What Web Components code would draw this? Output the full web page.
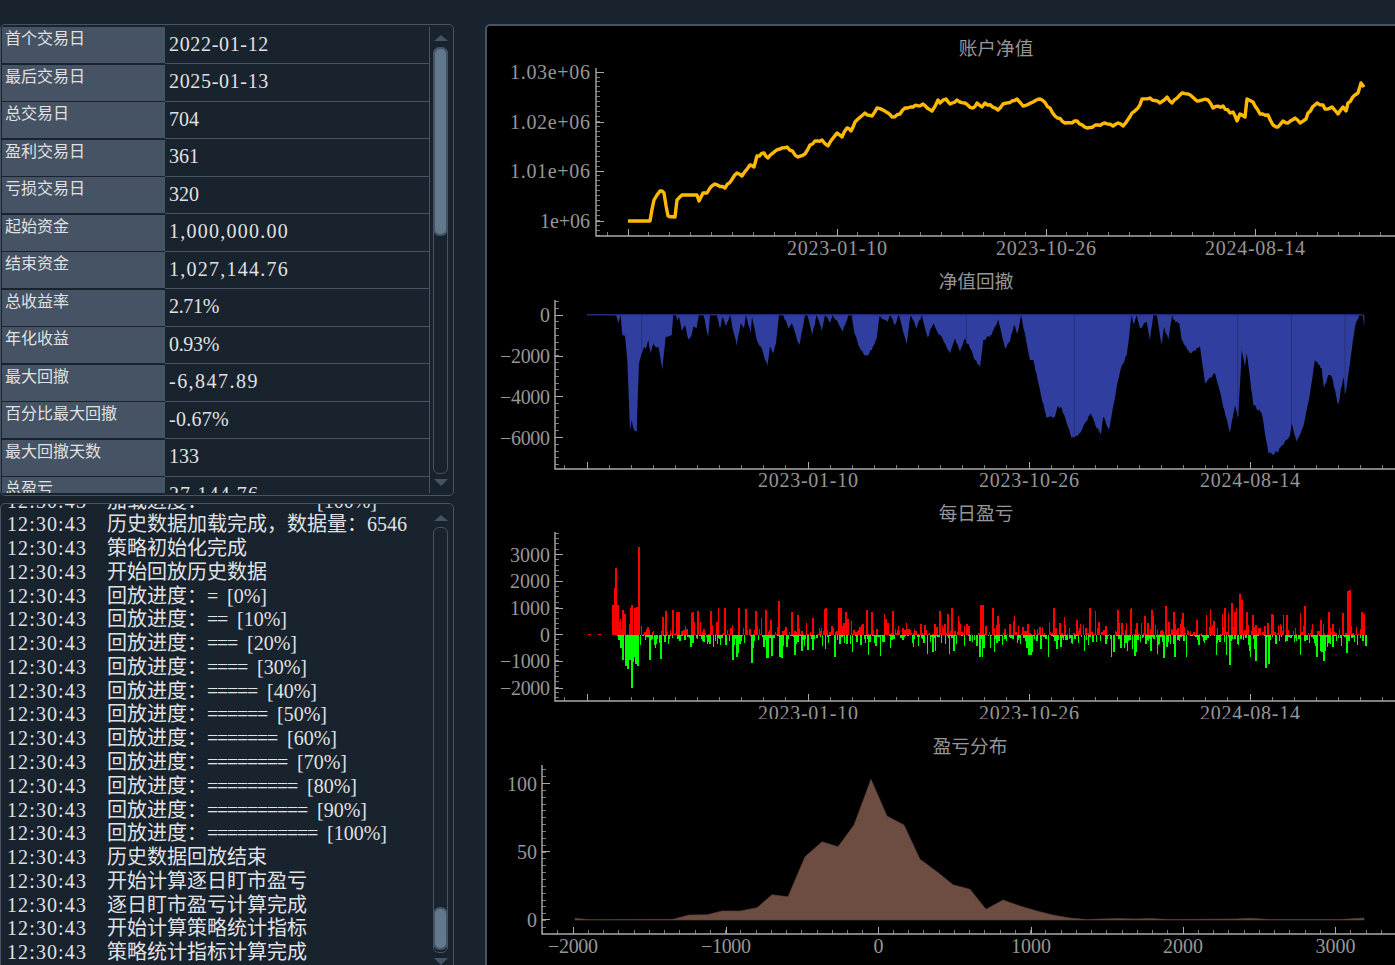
<!DOCTYPE html>
<html>
<head>
<meta charset="utf-8">
<title>回测结果</title>
<style>
  html, body { margin: 0; height: 100%; overflow: hidden; background: #19232D; }
</style>
</head>
<body>
<app-shell>
  <stats-panel slot="stats">
    <stat-row label="首个交易日" value="2022-01-12"></stat-row>
    <stat-row label="最后交易日" value="2025-01-13"></stat-row>
    <stat-row label="总交易日" value="704"></stat-row>
    <stat-row label="盈利交易日" value="361"></stat-row>
    <stat-row label="亏损交易日" value="320"></stat-row>
    <stat-row label="起始资金" value="1,000,000.00"></stat-row>
    <stat-row label="结束资金" value="1,027,144.76"></stat-row>
    <stat-row label="总收益率" value="2.71%"></stat-row>
    <stat-row label="年化收益" value="0.93%"></stat-row>
    <stat-row label="最大回撤" value="-6,847.89"></stat-row>
    <stat-row label="百分比最大回撤" value="-0.67%"></stat-row>
    <stat-row label="最大回撤天数" value="133"></stat-row>
    <stat-row label="总盈亏" value="27,144.76"></stat-row>
  </stats-panel>
  <log-panel slot="log">
    <log-line>加载进度：<half-text>==========</half-text><half-text gap>[100%]</half-text></log-line>
    <log-line>历史数据加载完成，数据量：6546</log-line>
    <log-line>策略初始化完成</log-line>
    <log-line>开始回放历史数据</log-line>
    <log-line>回放进度：<half-text>=</half-text><half-text gap>[0%]</half-text></log-line>
    <log-line>回放进度：<half-text>==</half-text><half-text gap>[10%]</half-text></log-line>
    <log-line>回放进度：<half-text>===</half-text><half-text gap>[20%]</half-text></log-line>
    <log-line>回放进度：<half-text>====</half-text><half-text gap>[30%]</half-text></log-line>
    <log-line>回放进度：<half-text>=====</half-text><half-text gap>[40%]</half-text></log-line>
    <log-line>回放进度：<half-text>======</half-text><half-text gap>[50%]</half-text></log-line>
    <log-line>回放进度：<half-text>=======</half-text><half-text gap>[60%]</half-text></log-line>
    <log-line>回放进度：<half-text>========</half-text><half-text gap>[70%]</half-text></log-line>
    <log-line>回放进度：<half-text>=========</half-text><half-text gap>[80%]</half-text></log-line>
    <log-line>回放进度：<half-text>==========</half-text><half-text gap>[90%]</half-text></log-line>
    <log-line>回放进度：<half-text>===========</half-text><half-text gap>[100%]</half-text></log-line>
    <log-line>历史数据回放结束</log-line>
    <log-line>开始计算逐日盯市盈亏</log-line>
    <log-line>逐日盯市盈亏计算完成</log-line>
    <log-line>开始计算策略统计指标</log-line>
    <log-line>策略统计指标计算完成</log-line>
  </log-panel>
  <chart-panel slot="charts">
    <plot-chart name="equity"></plot-chart>
    <plot-chart name="drawdown"></plot-chart>
    <plot-chart name="pnl"></plot-chart>
    <plot-chart name="dist"></plot-chart>
  </chart-panel>
</app-shell>

<script>
const FONT = '"Liberation Serif", "Noto Sans CJK SC", serif'

// the original font has half-width latin, so pad each string out to 10px a char
const measure = document.createElement('canvas').getContext('2d')
measure.font = '20px "Liberation Serif"'
function halfSpacing(text) {
  return ((text.length * 10 - measure.measureText(text).width) / text.length) + 'px'
}

function rng(seed) {
  return () => {
    seed = (seed + 0x6D2B79F5) | 0
    let t = Math.imul(seed ^ (seed >>> 15), 1 | seed)
    t = (t + Math.imul(t ^ (t >>> 7), 61 | t)) ^ t
    return ((t ^ (t >>> 14)) >>> 0) / 4294967296
  }
}

class AppShell extends HTMLElement {
  constructor() {
    super()
    this.attachShadow({ mode: 'open' }).innerHTML = `
      <style>
        :host { display: grid; grid-template-columns: 454px 920px; column-gap: 31px;
                height: 965px; padding-top: 24px; box-sizing: border-box; overflow: hidden;
                font-family: ${FONT}; color: #E0E1E3; }
        .left { display: flex; flex-direction: column; gap: 7px; }
      </style>
      <div class="left"><slot name="stats"></slot><slot name="log"></slot></div>
      <slot name="charts"></slot>`
  }
}

class ScrollBar extends HTMLElement {
  constructor() {
    super()
    this.attachShadow({ mode: 'open' }).innerHTML = `
      <style>
        :host { display: flex; flex-direction: column; align-items: center; width: 15px; flex: none; }
        .up, .down { width: 0; height: 0; border-left: 7px solid transparent; border-right: 7px solid transparent; flex: none; }
        .up { border-bottom: 6px solid #455364; margin-bottom: 6px; }
        .down { border-top: 7px solid #455364; margin-top: 5px; }
        .track { flex: 1; width: 100%; box-sizing: border-box; border: 1px solid #455364; border-radius: 6px; }
        .handle { margin: -1px; background: #60798B; border: 2px solid #455364; border-radius: 7px; }
      </style>
      <div class="up"></div>
      <div class="track"><div class="handle"></div></div>
      <div class="down"></div>`
  }
  connectedCallback() {
    const h = this.shadowRoot.querySelector('.handle')
    h.style.marginTop = (this.getAttribute('offset') - 1) + 'px'
    h.style.height = (this.getAttribute('size') - 4) + 'px'
  }
}

class StatsPanel extends HTMLElement {
  constructor() {
    super()
    this.attachShadow({ mode: 'open' }).innerHTML = `
      <style>
        :host { display: flex; height: 472px; box-sizing: border-box; border: 1px solid #455364;
                border-radius: 5px; padding: 1.5px 1px 2px 1px; overflow: hidden; }
        .rows { width: 427px; flex: none; overflow: hidden; border-right: 1px solid #455364; }
        scroll-bar { margin: 8.5px 0 7px 3px; }
      </style>
      <div class="rows"><slot></slot></div>
      <scroll-bar offset="0" size="189"></scroll-bar>`
  }
}

class StatRow extends HTMLElement {
  constructor() {
    super()
    this.attachShadow({ mode: 'open' }).innerHTML = `
      <style>
        :host { display: grid; grid-template-columns: 163px 1fr; height: 37.5px; box-sizing: border-box; }
        .label { background: #455364; margin: .5px 0 1px; padding-left: 3px; font-size: 16px; line-height: 24px; white-space: nowrap; }
        .value { border-bottom: 1px solid #455364; padding-left: 4px; font-size: 20px; line-height: 35.6px; white-space: nowrap; }
      </style>
      <div class="label"></div>
      <div class="value"></div>`
  }
  connectedCallback() {
    const value = this.getAttribute('value')
    const v = this.shadowRoot.querySelector('.value')
    v.textContent = value
    v.style.letterSpacing = halfSpacing(value)
    this.shadowRoot.querySelector('.label').textContent = this.getAttribute('label')
  }
}

class LogPanel extends HTMLElement {
  constructor() {
    super()
    this.attachShadow({ mode: 'open' }).innerHTML = `
      <style>
        :host { display: flex; height: 480px; flex: none; box-sizing: border-box; border: 1px solid #455364;
                border-radius: 5px; overflow: hidden; }
        .lines { flex: 1; overflow: hidden; padding-top: 1px; }
        .inner { margin-top: -15.45px; }
        scroll-bar { margin: 11px 5px 17px 0; }
      </style>
      <div class="lines"><div class="inner"><slot></slot></div></div>
      <scroll-bar offset="380" size="43"></scroll-bar>`
  }
}

class LogLine extends HTMLElement {
  constructor() {
    super()
    this.attachShadow({ mode: 'open' }).innerHTML = `
      <style>
        :host { display: flex; height: 23.78px; line-height: 23.78px; font-size: 20px; padding-left: 6px; white-space: nowrap; }
        .time { width: 100px; flex: none; }
      </style>
      <div class="time"></div><div><slot></slot></div>`
  }
  connectedCallback() {
    const t = this.shadowRoot.querySelector('.time')
    t.textContent = this.getAttribute('time') || '12:30:43'
    t.style.letterSpacing = halfSpacing(t.textContent)
  }
}

class HalfText extends HTMLElement {
  constructor() {
    super()
    this.attachShadow({ mode: 'open' }).innerHTML = `
      <style>
        :host { display: inline-block; }
        :host([gap]) { margin-left: 10px; }
      </style><slot></slot>`
  }
  connectedCallback() { this.style.letterSpacing = halfSpacing(this.textContent) }
}

class ChartPanel extends HTMLElement {
  constructor() {
    super()
    this.attachShadow({ mode: 'open' }).innerHTML = `
      <style>
        :host { display: grid; grid-template-rows: 229px 235px 229px 246px; align-content: start;
                height: 960px; box-sizing: border-box; background: #000; border: 2px solid #455364;
                border-bottom: 0; border-radius: 5px 5px 0 0; overflow: hidden; }
      </style><slot></slot>`
  }
}

// points read off the reference, in page pixels
const EQUITY = [[628,221],[650,221],[654,200],[657,195],[660,191],[664,193],[668,216],[675,217],[677,200],[682,195],[697,195],[699,201],[703,193],[707,193],[710,188],[715,184],[725,188],[737,173],[742,176],[750,165],[754,167],[757,156],[764,153],[768,158],[773,153],[780,149],[787,147],[798,157],[805,154],[810,145],[815,141],[822,140],[828,146],[837,133],[842,137],[847,128],[851,131],[855,122],[865,113],[872,116],[877,108],[883,110],[892,117],[900,114],[905,108],[913,107],[923,104],[932,111],[938,100],[940,103],[946,99],[950,104],[957,100],[965,103],[973,108],[977,103],[982,107],[985,103],[998,110],[1003,104],[1017,99],[1023,106],[1033,102],[1040,99],[1050,108],[1055,116],[1065,123],[1077,121],[1087,128],[1098,125],[1105,123],[1113,126],[1118,123],[1123,126],[1132,113],[1138,108],[1142,99],[1150,98],[1160,103],[1167,97],[1172,103],[1182,93],[1188,94],[1197,101],[1208,100],[1213,108],[1223,106],[1230,113],[1233,112],[1237,121],[1240,114],[1245,117],[1247,99],[1253,102],[1260,114],[1268,115],[1273,125],[1278,127],[1283,121],[1288,123],[1295,118],[1300,123],[1306,119],[1308,113],[1317,103],[1323,105],[1325,109],[1332,107],[1338,114],[1343,107],[1346,111],[1348,103],[1355,95],[1358,93],[1361,83],[1364,87]]

const DD_LEFT = [291,163,375,163,380,170,385,190,392,165,397,225,405,228,412,300,420,512,425,480,432,510,440,515,447,310,455,280,462,262,468,265,475,240,482,280,490,250,497,262,505,260,517,330,527,230,535,230,545,225,550,165,558,165,562,182,567,170,575,212,585,195,595,238,605,225,610,200,620,203,627,165,640,165,655,230,660,165,680,165,690,208,697,170,708,198,720,165,740,258,752,190,762,205,768,165,782,220,786,170,800,240,815,265,825,300,832,318,840,260,850,280,858,250,867,165,880,165,895,205,905,190,928,255,945,165,952,165,967,225,980,165,995,212,1005,165,1020,188,1028,165,1040,180,1058,215,1075,165,1085,165,1093,218,1105,255,1120,280,1130,288,1145,270,1160,235,1168,170,1180,178,1192,187,1200,165,1215,195,1225,165,1232,185,1250,252,1262,165,1280,205,1295,165,1313,232,1330,190,1345,222]
const DD_RIGHT = [0,225,30,280,45,235,60,275,75,235,90,265,105,300,120,322,130,240,155,225,175,178,195,265,210,245,222,195,232,222,243,165,262,260,270,300,280,300,300,390,320,475,345,470,352,440,365,445,395,535,420,520,435,490,452,460,470,505,483,522,490,470,507,510,530,380,540,335,560,285,575,165,582,195,590,165,600,205,620,185,630,240,640,165,650,165,665,255,672,200,685,240,697,165,700,180,718,190,725,240,752,280,780,260,795,370,825,340,870,518,885,435,895,470,905,270,915,320,920,280,940,435,965,460,985,580,1000,585,1030,555,1050,525,1055,490,1070,545,1090,500,1110,400,1125,300,1145,325,1152,385,1165,345,1175,350,1195,435,1210,350,1217,400,1230,310,1245,200,1258,165,1268,165,1273,200]

const DIST = [[575,918.3],[590,919.7],[673,919.3],[689,915],[707,914.7],[722,911],[740,911],[757,907.7],[772,894.7],[788,896.7],[805,856.7],[822,841.7],[838,846.7],[854,825],[871,779.3],[887,816],[904,825],[920,859.3],[937,871.7],[953,884.7],[970,889.3],[986,909.3],[1003,900],[1020,906],[1037,911],[1053,915],[1070,918],[1087,919.5],[1100,919],[1120,918.5],[1135,919],[1150,918.5],[1170,919.5],[1235,919],[1250,918.3],[1270,919.5],[1340,919.5],[1364,918]]

const RED_SPIKES = [[612,605],[614,588],[615.3,568],[617,605],[619,622],[622,610],[624,614],[631,605],[634,608],[636,607],[638.3,547],[665,611],[672,610],[678,612],[692,612],[697,611],[710,611],[724,608],[738,610],[745,609],[755,611],[778,601],[791,612],[825,608],[840,608],[845,612],[866,610],[980,605],[982,605],[1117,610],[1130,609],[1151,610],[1165,606],[1173,612],[1224,608],[1231,603],[1239,594],[1241,600],[1246,612],[1272,615],[1286,615],[1304,606],[1342,613],[1347,591],[1349,590],[1361,612],[1363,614]]
const GREEN_SPIKES = [[618,640],[620,648],[622,660],[625,666],[627,669],[629,660],[630.7,688],[632,662],[635,664],[636.5,666],[649,660],[660,659],[732,660],[751,663],[766,658],[767,658],[771,656],[779,657],[781,658],[834,657],[979,657],[1028,655],[1135,652],[1163,658],[1229,665],[1255,661],[1265,668],[1268,664],[1323,661],[1346,653],[1365,646]]

function ragged(points, step, amount, seed) {
  const rand = rng(seed)
  const out = []
  for (let i = 0; i < points.length - 1; i++) {
    const [x0, y0] = points[i], [x1, y1] = points[i + 1]
    const n = Math.max(1, Math.round((x1 - x0) / step))
    for (let k = 0; k < n; k++) {
      const t = k / n
      // flat runs stay flat
      const j = k === 0 || y0 === y1 ? 0 : (rand() - .5) * amount
      out.push([x0 + (x1 - x0) * t, y0 + (y1 - y0) * t + j])
    }
  }
  out.push(points[points.length - 1])
  return out
}

const toPath = pts => 'M' + pts.map(p => p[0].toFixed(1) + ' ' + p[1].toFixed(1)).join('L')

function equityMarks() {
  return `<path d="${toPath(ragged(EQUITY, 2.5, 2.2, 7))}" fill="none" stroke="#FFBA00" stroke-width="3.4" stroke-linejoin="round"/>`
}

function drawdownMarks() {
  const pts = []
  for (let i = 0; i < DD_LEFT.length; i += 2) pts.push([DD_LEFT[i] / 3 + 490, DD_LEFT[i + 1] / 3 + 260])
  for (let i = 0; i < DD_RIGHT.length; i += 2) pts.push([DD_RIGHT[i] / 3 + 940, DD_RIGHT[i + 1] / 3 + 260])
  const rough = ragged(pts, 1.2, 3, 11).map(p => [p[0], Math.max(314.7, p[1])])
  const seams = [641.7, 966.3, 1020.3, 1074.3, 1237.7, 1291.3, 1345]
    .map(x => {
      // only as deep as the fill at that x
      const hit = rough.find(p => p[0] >= x)
      return `M${x} 315V${hit[1].toFixed(1)}`
    }).join('')
  return `<path d="${toPath(rough)}L1364.3 314.7Z" fill="#303F9F"/>
    <path d="${seams}" stroke="#263278" stroke-width="1"/>
    <path d="M587 314.8H1362" stroke="#232E78" stroke-width="1.4"/>`
}

function pnlMarks() {
  const rand = rng(42)
  let red = 'M588 634h3v1h-3zM598 634h3v1h-3z', green = ''
  const bar = (x, y0, y1, w) => `M${x} ${y0}h${w}V${y1}h-${w}z`
  for (let x = 612; x < 1365; x += 1.07) {
    const early = x < 640 ? 1.3 : 1
    const w = (1 + rand()).toFixed(1)
    if (rand() < .58) {
      const h = Math.min(27, -Math.log(1 - rand()) * 6.5 * early)
      red += bar(x.toFixed(1), (634.5 - h).toFixed(1), 634.5, w)
    } else {
      const h = Math.min(22, -Math.log(1 - rand()) * 6 * early)
      green += bar(x.toFixed(1), 634.5, (634.5 + h).toFixed(1), w)
    }
    if (rand() < .4) {
      const h = -Math.log(1 - rand()) * 5
      green += bar(x.toFixed(1), 634.5, (634.5 + Math.min(20, h)).toFixed(1), w)
    }
  }
  RED_SPIKES.forEach(s => { red += bar(s[0], s[1], 634.5, 2) })
  GREEN_SPIKES.forEach(s => { green += bar(s[0], 634.5, s[1], 2) })
  return `<g shape-rendering="crispEdges"><path d="${green}" fill="#0F0"/><path d="${red}" fill="#F00"/></g>`
}

function distMarks() {
  return `<path d="${toPath(DIST)}L1364 920H575Z" fill="#6D4C41" stroke="#5a4036" stroke-width=".6"/>`
}

const DATE_TICKS = [[587], [808, '2023-01-10'], [1029, '2023-10-26'], [1250, '2024-08-14']]

const PLOTS = {
  equity: {
    top: 26, height: 229, title: '账户净值', titleX: 996, titleY: 55,
    axisX: 596, axisY: 236, yTop: 68, labelRight: 590, xBase: 255,
    yTicks: [[72, '1.03e+06'], [122, '1.02e+06'], [171, '1.01e+06'], [221, '1e+06']], yMinor: 4.95,
    xTicks: [[628], [837, '2023-01-10'], [1046, '2023-10-26'], [1255, '2024-08-14']], xMinor: 20.9,
    marks: equityMarks
  },
  drawdown: {
    top: 255, height: 235, title: '净值回撤', titleX: 976, titleY: 288,
    axisX: 555, axisY: 469, yTop: 300, labelRight: 550, xBase: 487,
    yTicks: [[315, '0'], [356, '−2000'], [396.5, '−4000'], [437.5, '−6000']], yMinor: 6.8,
    xTicks: DATE_TICKS, xMinor: 22.1,
    marks: drawdownMarks
  },
  pnl: {
    top: 490, height: 229, title: '每日盈亏', titleX: 976, titleY: 520,
    axisX: 555, axisY: 701, yTop: 532, labelRight: 550, xBase: 719.5,
    yTicks: [[554.5, '3000'], [581, '2000'], [608, '1000'], [634.5, '0'], [661, '−1000'], [688, '−2000']], yMinor: 5.3,
    xTicks: DATE_TICKS, xMinor: 22.1,
    marks: pnlMarks
  },
  dist: {
    top: 719, height: 246, title: '盈亏分布', titleX: 970, titleY: 753,
    axisX: 542, axisY: 934, yTop: 765, labelRight: 537, xBase: 952.5,
    yTicks: [[783.5, '100'], [851.5, '50'], [919.5, '0']], yMinor: 6.85,
    xTicks: [[573, '−2000'], [726, '−1000'], [878.5, '0'], [1031, '1000'], [1183, '2000'], [1335.5, '3000']], xMinor: 15.25,
    marks: distMarks
  }
}

function axisMarkup(p) {
  let minor = '', major = '', labels = ''
  const label = (text, x, y, anchor) => {
    const len = text.length * 10
    return `<text x="${x}" y="${y}" text-anchor="${anchor}" textLength="${len}" lengthAdjust="spacing">${text}</text>`
  }
  // y ticks: minors walk out from the first major in both directions
  const y0 = p.yTicks[0][0]
  for (let y = y0 - p.yMinor * Math.floor((y0 - p.yTop) / p.yMinor); y < p.axisY; y += p.yMinor) {
    minor += `M${p.axisX} ${y.toFixed(1)}h4`
  }
  p.yTicks.forEach(([y, text]) => {
    major += `M${p.axisX} ${y}h7.5`
    labels += label(text, p.labelRight, y + 7, 'end')
  })
  // x ticks
  const x0 = p.xTicks[0][0]
  for (let x = x0 - p.xMinor * Math.floor((x0 - p.axisX) / p.xMinor); x < 1395; x += p.xMinor) {
    minor += `M${x.toFixed(1)} ${p.axisY}v-4`
  }
  p.xTicks.forEach(([x, text]) => {
    major += `M${x} ${p.axisY}v-7`
    if (text) labels += label(text, x, p.xBase, 'middle')
  })
  return `
    <path d="${minor}" stroke="#7a7a7a" stroke-width="1" fill="none" shape-rendering="crispEdges"/>
    <path d="${major}" stroke="#aaa" stroke-width="1" fill="none" shape-rendering="crispEdges"/>
    <path d="M${p.axisX} ${p.yTop}V${p.axisY}H1395" stroke="#aaa" stroke-width="1.4" fill="none"/>
    <g fill="#969696" font-size="20">${labels}</g>`
}

class PlotChart extends HTMLElement {
  constructor() {
    super()
    this.attachShadow({ mode: 'open' })
  }
  connectedCallback() {
    const p = PLOTS[this.getAttribute('name')]
    this.shadowRoot.innerHTML = `
      <style>
        :host { display: block; overflow: hidden; }
        svg { display: block; font-family: ${FONT}; }
      </style>
      <svg width="908" height="${p.height}" viewBox="487 ${p.top} 908 ${p.height}">
        <text x="${p.titleX}" y="${p.titleY}" text-anchor="middle" fill="#969696" font-size="18.67">${p.title}</text>
        ${p.marks()}
        ${axisMarkup(p)}
      </svg>`
  }
}

customElements.define('scroll-bar', ScrollBar)
customElements.define('half-text', HalfText)
customElements.define('stat-row', StatRow)
customElements.define('stats-panel', StatsPanel)
customElements.define('log-line', LogLine)
customElements.define('log-panel', LogPanel)
customElements.define('plot-chart', PlotChart)
customElements.define('chart-panel', ChartPanel)
customElements.define('app-shell', AppShell)
</script>
</body>
</html>
